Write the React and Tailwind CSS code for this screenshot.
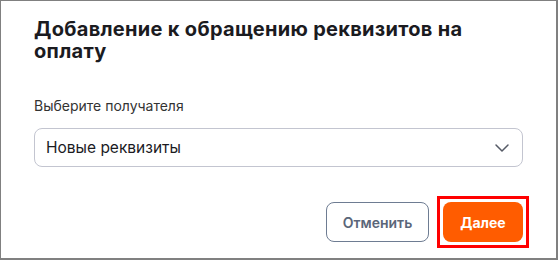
import React from "react";
import { ChevronDown } from "lucide-react";

export default function App() {
  return (
    <div
      className="w-[558px] h-[260px] bg-white border-t border-l border-r-2 border-b-2 border-[#808080] px-[33px] pt-[17px] flex flex-col"
      style={{ fontFamily: "Inter, 'Noto Sans', sans-serif" }}
    >
      <h2 className="text-[20px] leading-[22px] font-bold text-[#1b1b1f] tracking-[0.3px]">
        Добавление к обращению реквизитов на оплату
      </h2>
      <div className="mt-[34px] text-[14px] leading-[20px] text-[#333333]">
        Выберите получателя
      </div>
      <button className="mt-[12px] h-[39px] w-full rounded-lg border border-[#c3c5d0] bg-white flex items-center justify-between pl-[11px] pr-[8px] text-left">
        <span className="text-[15.5px] text-[#1b1b1f]">Новые реквизиты</span>
        <ChevronDown size={24} strokeWidth={1.5} className="text-[#555a66]" />
      </button>
      <div className="mt-[35px] flex justify-end items-center gap-[8px]">
        <button className="w-[103px] h-[40px] rounded-lg border border-[#6e7c92] bg-white text-[14px] font-semibold text-[#5b6679]">
          Отменить
        </button>
        <div className="-mr-[6px] -my-[6px] border-[3px] border-[#ff0000] p-[3px]">
          <button className="block w-[80px] h-[40px] rounded-lg bg-[#ff5c00] text-[14px] font-bold text-white">
            Далее
          </button>
        </div>
      </div>
    </div>
  );
}
